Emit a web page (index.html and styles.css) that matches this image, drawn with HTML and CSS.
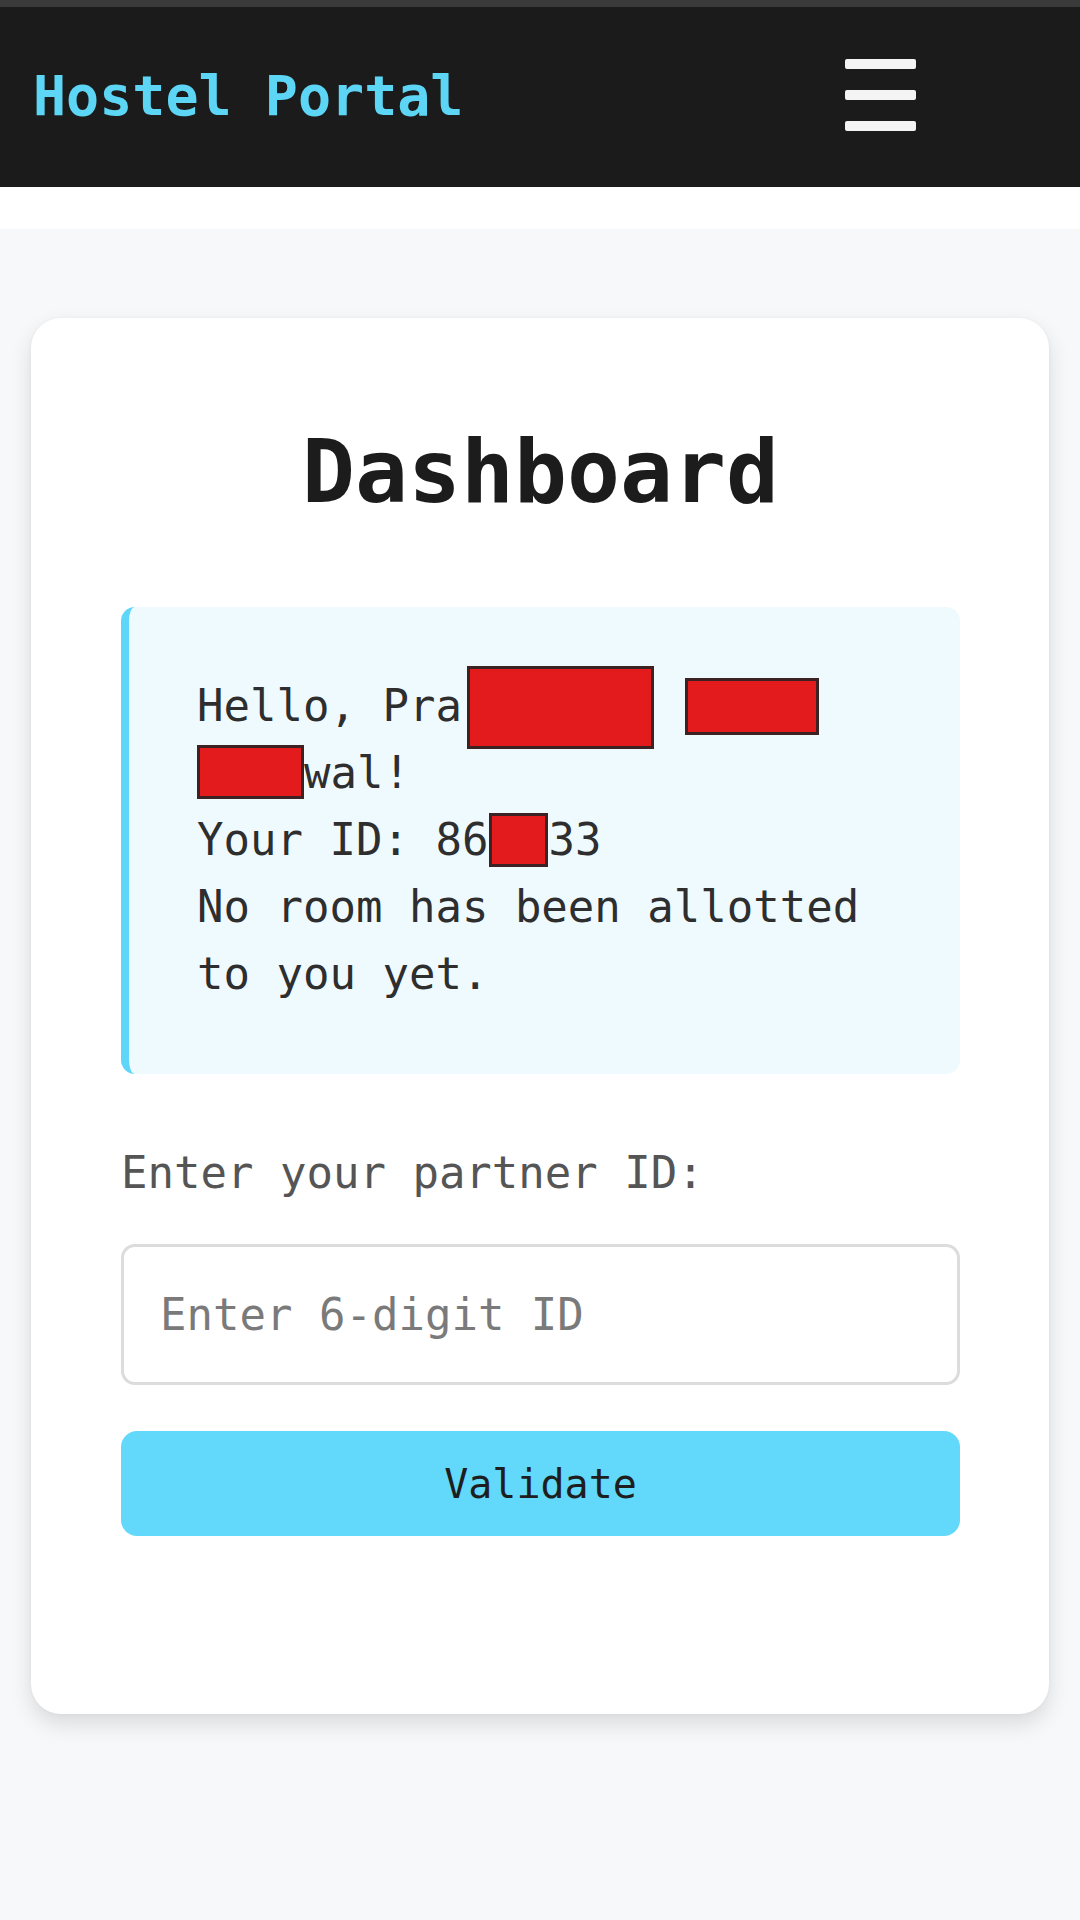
FILE: index.html
```html
<!DOCTYPE html>
<html lang="en">
<head>
<meta charset="utf-8">
<title>Hostel Portal</title>
<link rel="stylesheet" href="styles.css">
</head>
<body>
<header class="topbar">
  <div class="brand">Hostel Portal</div>
  <div class="menu" aria-label="menu">
    <span class="bar"></span>
    <span class="bar"></span>
    <span class="bar"></span>
  </div>
</header>
<main class="page">
  <section class="card">
    <h1 class="title">Dashboard</h1>
    <div class="info">
      <p class="info-text">Hello, Pra<span class="redact r1"></span> <span class="redact r2"></span><br><span class="redact r3"></span>wal!<br>Your ID: 86<span class="redact r4"></span>33<br>No room has been allotted to you yet.</p>
    </div>
    <label class="label" for="pid">Enter your partner ID:</label>
    <input class="field" id="pid" type="text" placeholder="Enter 6-digit ID">
    <button class="btn" type="button">Validate</button>
  </section>
</main>
</body>
</html>
```

FILE: styles.css
```css
html, body {
  margin: 0;
  padding: 0;
}

body {
  background: #ffffff;
  font-family: "DejaVu Sans Mono", "Liberation Mono", monospace;
  width: 1080px;
  min-height: 1920px;
}

.topbar {
  height: 180px;
  border-top: 7px solid #3a3a3a;
  background: #1b1b1b;
  display: flex;
  align-items: center;
  justify-content: space-between;
  padding: 0 164px 0 33px;
}

.brand {
  color: #5dd6f5;
  font-size: 55px;
  font-weight: bold;
  line-height: 1;
  margin-top: -2px;
}

.menu {
  display: flex;
  flex-direction: column;
  gap: 21px;
  width: 71px;
  margin-top: -4px;
}

.bar {
  display: block;
  height: 10px;
  background: #f4f4f4;
  border-radius: 2px;
}

.page {
  margin-top: 42px;
  background: #f7f8fa;
  min-height: 1691px;
  padding: 89px 31px 0;
}

.card {
  background: #ffffff;
  border-radius: 30px;
  box-shadow: 0 10px 22px rgba(0, 0, 0, 0.12), 0 0 4px rgba(0, 0, 0, 0.04);
  padding: 90px 89px 178px 90px;
  display: flex;
  flex-direction: column;
}

.title {
  margin: 11px 0 82px;
  text-align: center;
  font-size: 88px;
  line-height: 106px;
  font-weight: bold;
  color: #1c1c1c;
}

.info {
  background: #effaff;
  border-left: 8px solid #5dd6fa;
  border-radius: 14px;
  padding: 65px 60px 67px 68px;
}

.info-text {
  margin: 0;
  font-size: 44px;
  line-height: 67px;
  color: #2e2e2e;
}

.redact {
  display: inline-block;
  box-sizing: border-box;
  background: #e31b1c;
  border: 3px solid #3c2222;
  vertical-align: baseline;
}

.r1 {
  width: 187px;
  height: 83px;
  margin: -30px -5px -28px 5px;
}

.r2 {
  width: 134px;
  height: 57px;
  margin: -10px 0 -14px 10px;
}

.r3 {
  width: 107px;
  height: 54px;
  margin: -10px 0 -11px 0;
}

.r4 {
  width: 59px;
  height: 54px;
  margin: -10px 0 -12px 1px;
}

.label {
  margin-top: 66px;
  font-size: 44px;
  line-height: 66px;
  color: #555555;
}

.field {
  margin-top: 38px;
  height: 141px;
  box-sizing: border-box;
  border: 3px solid #dcdcdc;
  border-radius: 14px;
  padding: 0 36px;
  font-family: "DejaVu Sans Mono", "Liberation Mono", monospace;
  font-size: 44px;
  color: #333333;
  background: #ffffff;
  outline: none;
}

.field::placeholder {
  color: #7a7a7a;
}

.btn {
  margin-top: 46px;
  height: 105px;
  border: none;
  border-radius: 16px;
  background: #62d9fa;
  color: #1e1e1e;
  font-family: "DejaVu Sans Mono", "Liberation Mono", monospace;
  font-size: 40px;
  cursor: pointer;
}
```
